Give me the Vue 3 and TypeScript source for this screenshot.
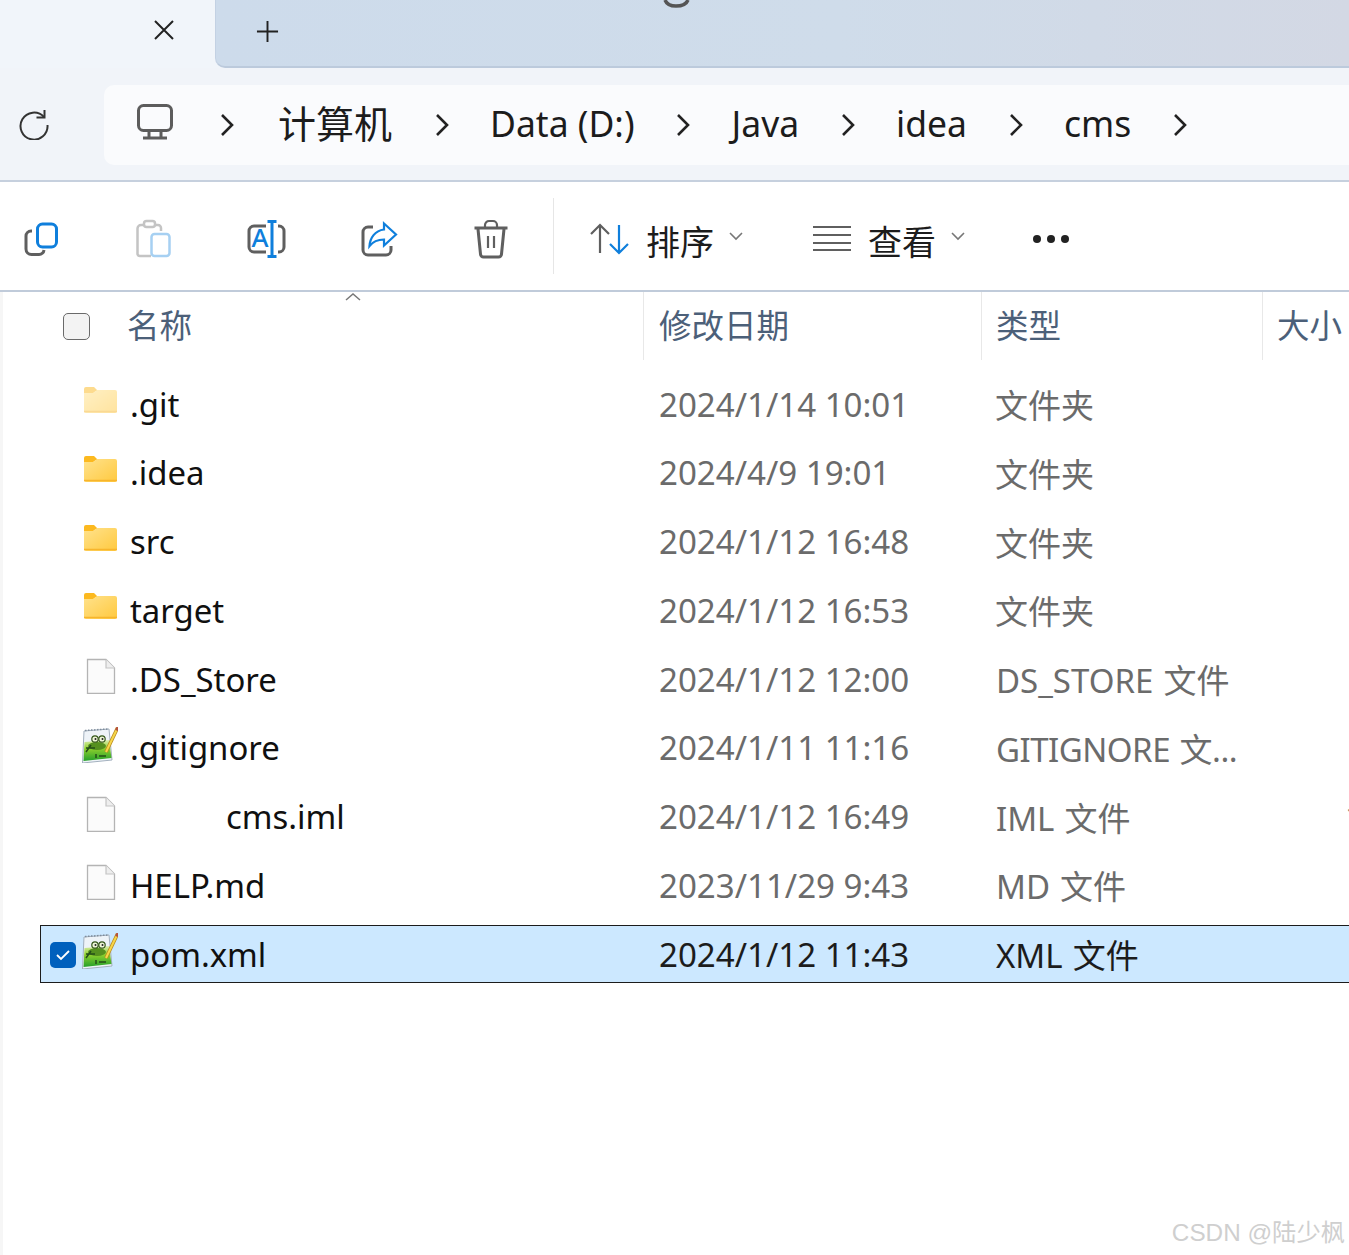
<script setup lang="ts">
type Kind = 'hidden' | 'folder' | 'file' | 'npp'
interface Row { name: string; date: string; type: string; kind: Kind; size?: string; selected?: boolean; indent?: boolean }
const rows: Row[] = [
  { name: '.git', date: '2024/1/14 10:01', type: '文件夹', kind: 'hidden' },
  { name: '.idea', date: '2024/4/9 19:01', type: '文件夹', kind: 'folder' },
  { name: 'src', date: '2024/1/12 16:48', type: '文件夹', kind: 'folder' },
  { name: 'target', date: '2024/1/12 16:53', type: '文件夹', kind: 'folder' },
  { name: '.DS_Store', date: '2024/1/12 12:00', type: 'DS_STORE 文件', kind: 'file' },
  { name: '.gitignore', date: '2024/1/11 11:16', type: 'GITIGNORE 文...', kind: 'npp' },
  { name: 'cms.iml', date: '2024/1/12 16:49', type: 'IML 文件', kind: 'file', indent: true, size: '1' },
  { name: 'HELP.md', date: '2023/11/29 9:43', type: 'MD 文件', kind: 'file' },
  { name: 'pom.xml', date: '2024/1/12 11:43', type: 'XML 文件', kind: 'npp', selected: true }
]
const crumbs = ['计算机', 'Data (D:)', 'Java', 'idea', 'cms']
</script>

<template>
  <div class="page">
    <header class="tabs">
      <div class="tab-active">
        <svg class="close" width="22" height="22" viewBox="0 0 22 22"><path d="M2 2 L20 20 M20 2 L2 20" /></svg>
      </div>
      <div class="tab-rest">
        <svg class="plus" width="23" height="23" viewBox="0 0 24 24"><path d="M12 1 V23 M1 12 H23" /></svg>
        <svg class="arc" width="30" height="8" viewBox="0 0 30 8"><path d="M3 0 C5 5 10 6 14 6 C19 6 24 5 26 0" /></svg>
      </div>
    </header>

    <nav class="address">
      <svg class="refresh" width="32" height="32" viewBox="0 0 32 32">
        <path d="M26 9 A13.5 13.5 0 1 0 29.5 17" />
        <path d="M26.5 2 V9.5 H18.5" />
      </svg>
      <div class="crumbs">
        <svg class="monitor" width="36" height="36" viewBox="0 0 36 36">
          <rect x="1.5" y="1.5" width="33" height="25" rx="5" />
          <path d="M12 27 V33 M24 27 V33 M6 34 H30" />
        </svg>
        <svg class="chev first" width="14" height="26" viewBox="0 0 14 26"><path d="M2 3 L12 13 L2 23" /></svg>
        <template v-for="c in crumbs" :key="c">
          <span class="crumb" :class="{ cjk: c === '计算机' }">{{ c }}</span>
          <svg class="chev" width="14" height="26" viewBox="0 0 14 26"><path d="M2 3 L12 13 L2 23" /></svg>
        </template>
      </div>
    </nav>

    <section class="toolbar">
      <div class="tool-icons">
        <svg class="tool" width="40" height="40" viewBox="0 0 40 40">
          <path class="g" d="M11 12 H10 A5 5 0 0 0 5 17 V30 A5.500 5.500 0 0 0 10.500 35.500 H18 A5 5 0 0 0 23 31" />
          <rect class="b" x="16.500" y="5" width="19" height="23" rx="5" />
        </svg>
        <svg class="tool" width="40" height="40" viewBox="0 0 40 40">
          <path class="lg" d="M9 6 H7 A3.500 3.500 0 0 0 3.500 9.500 V35 A2.500 2.500 0 0 0 6 37 H17" />
          <path class="lg" d="M20 6 H24 A3 3 0 0 1 27 9 V12" />
          <rect class="lg" x="10" y="2" width="11" height="6" rx="2.500" />
          <rect class="lb" x="17.500" y="15" width="18" height="22" rx="3" />
        </svg>
        <svg class="tool" width="40" height="40" viewBox="0 0 40 40">
          <path class="g" d="M20 7 H8 A5 5 0 0 0 3 12 V28 A5 5 0 0 0 8 33 H20" />
          <path class="g" d="M32 7 H33 A5 5 0 0 1 38 12 V28 A5 5 0 0 1 33 33 H32" />
          <path class="b" d="M26 3 V37 M21.500 2.500 H30.500 M21.500 37.500 H30.500" />
          <text class="a-text" x="5.500" y="28">A</text>
        </svg>
        <svg class="tool" width="40" height="40" viewBox="0 0 40 40">
          <path class="g" d="M14 8 H9 A5 5 0 0 0 4 13 V31 A5 5 0 0 0 9 36 H27 A5 5 0 0 0 32 31 V27" />
          <path class="b thin" d="M25 4.500 L37 15.500 L25 26.500 V20.500 C19 20.500 14 22.500 10.500 27 C11 19 16 11.500 25 10.500 Z" />
        </svg>
        <svg class="tool trash" width="40" height="40" viewBox="0 0 40 40">
          <path class="g" d="M3.500 9 H36.500 M7 10 L9.500 35 A3 3 0 0 0 12.500 38 H27.500 A3 3 0 0 0 30.500 35 L33 10" />
          <path class="g thin" d="M14 8 V6 A4 4 0 0 1 18 2 H22 A4 4 0 0 1 26 6 V8 M17 17 V29 M23 17 V29" />
        </svg>
      </div>
      <div class="divider"></div>
      <div class="cmd sort">
        <svg width="40" height="32" viewBox="0 0 40 32">
          <path class="g thin" d="M10 30 V2 M1 11 L10 2 L19 11" />
          <path class="b thin" d="M29 2 V30 M20 21 L29 30 L38 21" />
        </svg>
        <span class="cmd-label">排序</span>
        <svg class="mini" width="14" height="9" viewBox="0 0 14 9"><path d="M1 1 L7 7 L13 1" /></svg>
      </div>
      <div class="cmd view">
        <svg width="40" height="28" viewBox="0 0 40 28">
          <path class="g thin" d="M1 2 H39 M1 10 H39 M1 18 H39 M1 25 H39" />
        </svg>
        <span class="cmd-label">查看</span>
        <svg class="mini" width="14" height="9" viewBox="0 0 14 9"><path d="M1 1 L7 7 L13 1" /></svg>
      </div>
      <div class="dots"><i></i><i></i><i></i></div>
    </section>

    <main class="list">
      <div class="head">
        <div class="h-name">
          <span class="check"></span>
          <span>名称</span>
          <svg class="sort-up" width="16" height="8" viewBox="0 0 16 8"><path d="M1 7 L8 1 L15 7" /></svg>
        </div>
        <div class="h-col">修改日期</div>
        <div class="h-col type-head">类型</div>
        <div class="h-col size-head">大小</div>
      </div>

      <div class="rows">
        <div v-for="r in rows" :key="r.name" class="row" :class="{ selected: r.selected }">
          <div class="lead">
            <span v-if="r.selected" class="tick">
              <svg width="16" height="12" viewBox="0 0 16 12"><path d="M2 6 L6 10 L14 2" /></svg>
            </span>
            <svg v-if="r.kind === 'hidden' || r.kind === 'folder'" class="ficon" :class="{ pale: r.kind === 'hidden' }" width="36" height="36" viewBox="0 0 36 36">
              <defs>
                <linearGradient id="fold" x1="0" y1="0" x2="1" y2="1">
                  <stop offset="0" stop-color="#ffe28c" />
                  <stop offset="1" stop-color="#ffc93f" />
                </linearGradient>
              </defs>
              <path d="M2 6 A2 2 0 0 1 4 4 H12 L16 8 H14 L10 11 H2 Z" fill="#fcb91f" />
              <path d="M2 10 H11 L15 7 H33 A2 2 0 0 1 35 9 V28 A2 2 0 0 1 33 30 H4 A2 2 0 0 1 2 28 Z" fill="url(#fold)" />
              <path d="M2 28.500 H35" stroke="#f7b52c" stroke-width="1.500" fill="none" />
            </svg>
            <svg v-else-if="r.kind === 'file'" class="ficon" width="36" height="36" viewBox="0 0 36 36">
              <path d="M5.500 1.500 H24 L32.500 10 V35.500 H5.500 Z" fill="#fbfbfb" stroke="#b4b4b4" stroke-width="1.300" />
              <path d="M24 1.500 V10 H32.500" fill="#eeeeee" stroke="#c4c4c4" stroke-width="1.200" />
            </svg>
            <svg v-else class="ficon" width="36" height="36" viewBox="0 0 36 36">
              <defs>
                <linearGradient id="npp" x1="0" y1="0" x2="0" y2="1">
                  <stop offset="0" stop-color="#dcefb0" />
                  <stop offset="0.400" stop-color="#8fd02e" />
                  <stop offset="1" stop-color="#25a02a" />
                </linearGradient>
              </defs>
              <path d="M2 4 L27 2 L30 33 L0.500 36 Z" fill="#eef3f8" stroke="#a3b0be" stroke-width="1" />
              <path d="M3 3.500 L26 2" stroke="#7f8d9c" stroke-width="1.500" stroke-dasharray="1.500 1.500" fill="none" />
              <path d="M2.500 15 L27 13 L29.500 31 L1.500 34 Z" fill="url(#npp)" />
              <ellipse cx="15" cy="19" rx="9" ry="4" fill="#55901f" />
              <circle cx="13" cy="12" r="3.200" fill="#eef6d8" stroke="#35561b" stroke-width="1.200" />
              <circle cx="20" cy="12" r="3.200" fill="#eef6d8" stroke="#35561b" stroke-width="1.200" />
              <circle cx="13.500" cy="12" r="1" fill="#222" />
              <circle cx="20.500" cy="12" r="1" fill="#222" />
              <path d="M4 21 H13 M9 18 L4 25 M14 27 V31 M17 29 H24" stroke="#244d18" stroke-width="1.500" fill="none" />
              <path d="M35.500 1 L24 25" stroke="#b98a1c" stroke-width="3.600" fill="none" />
              <path d="M35.500 1 L24 25" stroke="#f7d64a" stroke-width="2" fill="none" />
              <path d="M36 0 L34.500 3.500" stroke="#b5533c" stroke-width="3" fill="none" />
            </svg>
          </div>
          <div class="name" :class="{ indent: r.indent }">{{ r.name }}</div>
          <div class="date">{{ r.date }}</div>
          <div class="muted type" :class="{ latin: r.kind !== 'folder' && r.kind !== 'hidden', tight: r.type.endsWith('...') }">{{ r.type }}</div>
          <div class="muted size">{{ r.size }}</div>
        </div>
      </div>
    </main>

    <div class="mark">CSDN @陆少枫</div>
  </div>
</template>

<style>
html, body { margin: 0; padding: 0; background: #fff; overflow: hidden; }
</style>

<style scoped>
.page {
  position: relative;
  display: flex;
  flex-direction: column;
  width: 1349px;
  height: 1255px;
  overflow: hidden;
  background: #fff;
  font-family: "Noto Sans", "Noto Sans CJK SC", sans-serif;
  color: #1a1a1a;
}
svg { display: block; flex: none; fill: none; }

.tabs { display: flex; flex: none; height: 68px; background: #f1f5fa; }
.tab-active { width: 215px; display: flex; align-items: flex-start; justify-content: flex-end; padding: 19px 40px 0 0; box-sizing: border-box; }
.close path, .plus path { stroke: #222; stroke-width: 2; }
.tab-rest {
  position: relative;
  flex: 1;
  background: linear-gradient(90deg, #cddbeb 0%, #cfdcea 55%, #d3d8e4 100%);
  border-bottom: 2px solid #bccadc;
  border-left: 1px solid #c3d1e3;
  border-bottom-left-radius: 10px;
  padding: 20px 0 0 40px;
}
.arc { position: absolute; left: 446px; top: 0; }
.arc path { stroke: #555; stroke-width: 3.500; }

.address {
  display: flex;
  flex: none;
  align-items: center;
  height: 114px;
  box-sizing: border-box;
  padding: 17px 0 15px 18px;
  background: #f1f4f9;
  border-bottom: 2px solid #c6d0de;
}
.refresh { margin-right: 54px; margin-top: -3px; }
.refresh path { stroke: #333; stroke-width: 2; }
.crumbs {
  flex: 1;
  height: 80px;
  display: flex;
  align-items: center;
  gap: 41.500px;
  padding-left: 33px;
  background: #fafbfd;
  border-radius: 10px 0 0 10px;
}
.monitor rect, .monitor path { stroke: #5c5c5c; stroke-width: 3; }
.monitor { margin-top: -6px; }
.chev path { stroke: #222; stroke-width: 2.600; }
.chev.first { margin-left: 5px; }
.crumb { font-size: 35.500px; line-height: 76px; height: 76px; margin-top: -4px; white-space: nowrap; color: #1c1c1c; }
.crumb.cjk { font-size: 38px; margin-left: 3px; margin-right: 1px; }

.toolbar {
  display: flex;
  flex: none;
  align-items: center;
  height: 110px;
  box-sizing: border-box;
  padding: 5px 0 0 21px;
  border-bottom: 2px solid #c0cbda;
}
.tool-icons { display: flex; width: 532px; }
.tool { margin-right: 72.500px; }
.tool:last-child { margin-right: 0; }
.g { stroke: #5f5f5f; stroke-width: 3; }
.b { stroke: #0f7fdc; stroke-width: 3; }
.lg { stroke: #c4c4c4; stroke-width: 2.500; }
.lb { stroke: #a6d0f2; stroke-width: 2.500; }
.thin { stroke-width: 2.200; }
.a-text { font-size: 26px; fill: #0f7fdc; font-family: "Noto Sans", sans-serif; font-weight: 500; }
.divider { width: 1px; height: 76px; background: #e6e6e6; margin-right: 36px; margin-top: -5px; }
.cmd { display: flex; align-items: center; }
.sort { width: 222px; }
.view { width: 221px; }
.cmd-label { font-size: 34px; margin: 7px 0 0 16px; color: #1c1c1c; line-height: 44px; }
.mini { margin-left: 15px; margin-top: -4px; }
.mini path { stroke: #777; stroke-width: 1.600; }
.dots { display: flex; gap: 6px; }
.dots i { width: 8px; height: 8px; border-radius: 50%; background: #222; display: block; }

.list { position: relative; flex: 1; border-left: 3px solid #f6f6f6; }
.head {
  display: grid;
  grid-template-columns: 640px 338px 281px 1fr;
  height: 68px;
  color: #4c6079;
  font-size: 32.500px;
  line-height: 68px;
}
.h-name { position: relative; display: flex; align-items: center; padding-left: 60px; }
.h-col { border-left: 1px solid #e8e8e8; padding-left: 15px; white-space: nowrap; height: 68px; }
.type-head, .size-head { padding-left: 14px; }
.check {
  width: 25px;
  height: 25px;
  margin-right: 37px;
  border: 1.500px solid #6a6a6a;
  border-radius: 5px;
  background: #f3f3f3;
}
.sort-up { position: absolute; left: 342px; top: 1px; }
.sort-up path { stroke: #777; stroke-width: 1.500; }

.rows { padding-top: 15px; }
.row {
  display: grid;
  grid-template-columns: 89px 529px 336px 280px 100px;
  align-items: center;
  box-sizing: border-box;
  height: 58px;
  width: 1400px;
  margin: 0 0 10.750px 37px;
  border: 1px solid transparent;
  font-size: 33px;
  white-space: nowrap;
}
.lead { position: relative; display: flex; align-items: center; justify-content: flex-end; height: 100%; padding-right: 12px; }
.ficon { margin-top: -6px; }
.pale { opacity: 0.5; }
.name { color: #101010; font-size: 32.900px; }
.indent { padding-left: 96px; }
.date { color: #6b6b6b; font-size: 33.100px; }
.muted { color: #6b6b6b; }
.type { word-spacing: 1.500px; }
.latin { padding-left: 1px; }
.tight { letter-spacing: -0.500px; }
.size { padding-left: 70px; }
.row.selected { background: #cce8ff; border-color: #1c1c1c; }
.row.selected .muted, .row.selected .date { color: #1c1c1c; }
.tick {
  position: absolute;
  left: 9px;
  top: 15.500px;
  width: 26px;
  height: 26px;
  border-radius: 5px;
  background: #0060bd;
  display: flex;
  align-items: center;
  justify-content: center;
}
.tick path { stroke: #fff; stroke-width: 1.800; }

.mark {
  position: absolute;
  right: 4px;
  bottom: 7px;
  font-size: 24.300px;
  font-family: "Liberation Sans", "Noto Sans CJK SC", sans-serif;
  color: #cfcfcf;
  white-space: nowrap;
}
</style>
